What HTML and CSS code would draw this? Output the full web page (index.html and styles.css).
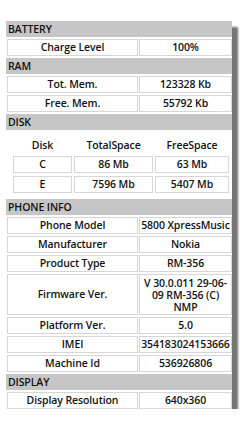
FILE: index.html
```html
<!DOCTYPE html>
<html>
<head>
<meta charset="utf-8">
<link rel="stylesheet" href="styles.css">
</head>
<body>
<div class="panel">
  <div class="hdr">BATTERY</div>
  <div class="row"><div class="cell">Charge Level</div><div class="cell">100%</div></div>

  <div class="hdr">RAM</div>
  <div class="row"><div class="cell">Tot. Mem.</div><div class="cell">123328 Kb</div></div>
  <div class="row"><div class="cell">Free. Mem.</div><div class="cell">55792 Kb</div></div>

  <div class="hdr">DISK</div>
  <div class="disk">
    <div class="dhead">Disk</div><div class="dhead">TotalSpace</div><div class="dhead">FreeSpace</div>
    <div class="cell">C</div><div class="cell">86 Mb</div><div class="cell">63 Mb</div>
    <div class="cell">E</div><div class="cell">7596 Mb</div><div class="cell">5407 Mb</div>
  </div>

  <div class="hdr">PHONE INFO</div>
  <div class="row"><div class="cell">Phone Model</div><div class="cell">5800 XpressMusic</div></div>
  <div class="row"><div class="cell">Manufacturer</div><div class="cell">Nokia</div></div>
  <div class="row"><div class="cell">Product Type</div><div class="cell">RM-356</div></div>
  <div class="row"><div class="cell mid">Firmware Ver.</div><div class="cell multi">V 30.0.011 29-06-<br>09 RM-356 (C)<br>NMP</div></div>
  <div class="row"><div class="cell">Platform Ver.</div><div class="cell">5.0</div></div>
  <div class="row"><div class="cell">IMEI</div><div class="cell">354183024153666</div></div>
  <div class="row"><div class="cell">Machine Id</div><div class="cell">536926806</div></div>

  <div class="hdr">DISPLAY</div>
  <div class="row last"><div class="cell">Display Resolution</div><div class="cell">640x360</div></div>
</div>
</body>
</html>
```
FILE: styles.css
```css
html, body {
  margin: 0;
  padding: 0;
  background: #fff;
}
body {
  font-family: "Open Sans", "DejaVu Sans", sans-serif;
  font-size: 10.5px;
  letter-spacing: -0.1px;
  font-weight: 600;
  color: #121212;
}
.panel {
  margin: 21px 0 0 6px;
  width: 226px;
  background: #fff;
  box-shadow: 6px 6px 2px #747474;
}
.hdr {
  background: #c6c6c6;
  height: 16px;
  line-height: 16px;
  padding-left: 2px;
  color: #111;
}
.row {
  display: grid;
  grid-template-columns: 131px 1fr;
  column-gap: 1px;
  padding-left: 1px;
  margin: 2px 0;
}
.row.last {
  margin-bottom: 0;
}
.cell {
  border: 1px solid #d6d6d6;
  text-align: center;
  line-height: 11px;
  padding: 2px 1px;
  white-space: nowrap;
}
.cell.multi {
  line-height: 12px;
  padding: 2px 1px 1px;
}
.mid {
  display: flex;
  align-items: center;
  justify-content: center;
}
.disk {
  display: grid;
  grid-template-columns: 59px 79px 74px;
  column-gap: 2px;
  row-gap: 3px;
  padding: 7px 0 6px 7px;
}
.dhead {
  text-align: center;
  line-height: 16px;
}
```
